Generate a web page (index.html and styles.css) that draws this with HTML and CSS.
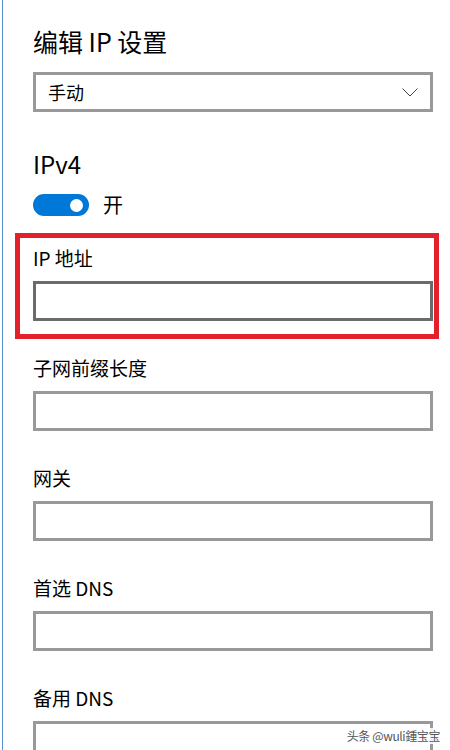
FILE: index.html
```html
<!DOCTYPE html>
<html lang="zh-CN">
<head>
  <meta charset="UTF-8" />
  <title>编辑 IP 设置</title>
  <link rel="stylesheet" href="styles.css">
</head>
<body>
  <div class="panel">
    <h1 class="title">编辑 IP 设置</h1>

    <div class="select-box">
      <span>手动</span>
      <svg class="chevron" width="16" height="9" viewBox="0 0 16 9">
        <polyline points="0.5,0.5 8,8 15.5,0.5" fill="none" stroke="#444" stroke-width="1" />
      </svg>
    </div>

    <h2 class="section">IPv4</h2>
    <div class="toggle-row">
      <div class="toggle"><span class="knob"></span></div>
      <span class="toggle-label">开</span>
    </div>

    <div class="field highlight">
      <label class="field-label">IP 地址</label>
      <div class="text-input active"></div>
    </div>

    <div class="field">
      <label class="field-label">子网前缀长度</label>
      <div class="text-input"></div>
    </div>

    <div class="field">
      <label class="field-label">网关</label>
      <div class="text-input"></div>
    </div>

    <div class="field">
      <label class="field-label">首选 DNS</label>
      <div class="text-input"></div>
    </div>

    <div class="field">
      <label class="field-label">备用 DNS</label>
      <div class="text-input"></div>
    </div>
  </div>

  <div class="watermark">头条 @wuli鍾宝宝</div>
</body>
</html>
```

FILE: styles.css
```css
* {
  margin: 0;
  padding: 0;
  box-sizing: border-box;
}
body {
  font-family: "Noto Sans CJK SC", "Noto Sans", sans-serif;
  background: #fff;
  color: #000;
  height: 750px;
  overflow: hidden;
  position: relative;
}
/* panel with the thin blue edge on the left */
.panel {
  margin-left: 2px;
  border-left: 1px solid #5b8fcf;
  padding: 26px 0 0 30px;
  width: 433px;
  min-height: 750px;
}
.title {
  font-size: 25px;
  font-weight: 400;
  line-height: 30px;
  margin-bottom: 16px;
}
/* dropdown */
.select-box {
  width: 400px;
  height: 40px;
  border: 3px solid #999;
  display: flex;
  align-items: center;
  justify-content: space-between;
  padding: 0 12px 0 12px;
  font-size: 18px;
}
.chevron {
  margin-top: 1px;
}
.section {
  font-size: 24px;
  font-weight: 400;
  line-height: 30px;
  margin-top: 37px;
}
/* toggle switch */
.toggle-row {
  display: flex;
  align-items: center;
  gap: 14px;
  margin-top: 15px;
}
.toggle {
  width: 56px;
  height: 22px;
  border-radius: 11px;
  background: #0078d7;
  display: flex;
  align-items: center;
  justify-content: flex-end;
  padding-right: 6px;
}
.knob {
  width: 13px;
  height: 13px;
  border-radius: 50%;
  background: #fff;
}
.toggle-label {
  font-size: 20px;
  line-height: 22px;
}
/* fields */
.field {
  margin-top: 34px;
}
.field-label {
  display: block;
  font-size: 19px;
  line-height: 26px;
  margin-bottom: 10px;
}
.text-input {
  width: 400px;
  height: 40px;
  border: 3px solid #999;
  background: #fff;
}
.text-input.active {
  border-color: #6b6b6b;
}
.field.highlight {
  margin: 17px 0 0 -18px;
  width: 424px;
  border: 5px solid #e3212d;
  padding: 7px 1px 13px 13px;
}
.highlight + .field {
  margin-top: 16px;
}
/* source watermark sits over the last input */
.watermark {
  position: absolute;
  right: 9px;
  top: 728px;
  font-size: 12px;
  line-height: 16px;
  letter-spacing: -0.4px;
  white-space: nowrap;
  color: #555;
  background: rgba(255, 255, 255, 0.85);
  padding: 0 1px;
}
```
